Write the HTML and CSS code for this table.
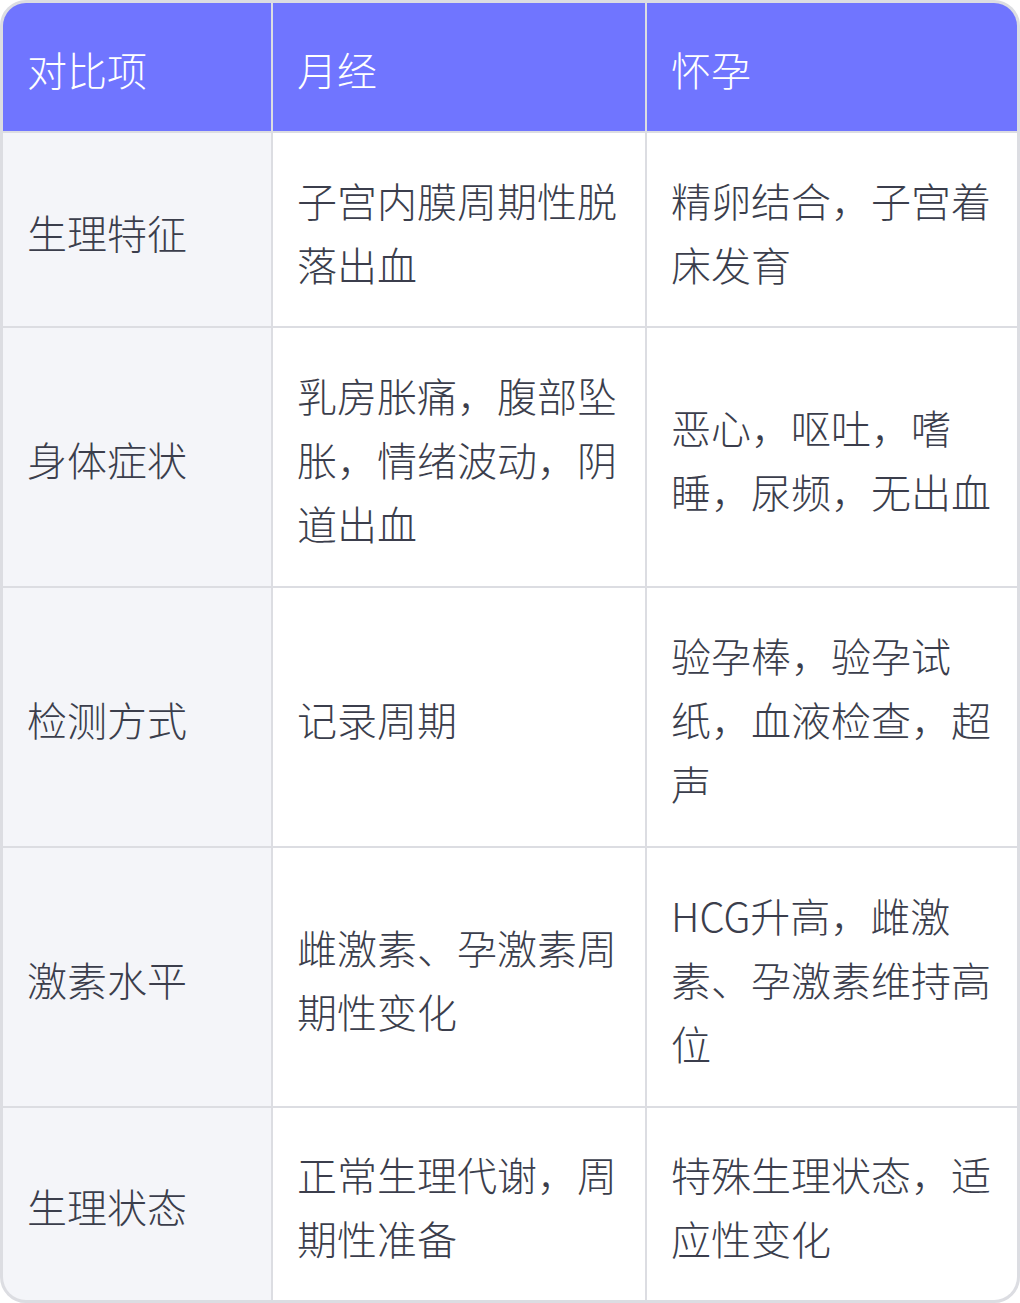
FILE: index.html
```html
<!DOCTYPE html>
<html lang="zh-CN">
<head>
<meta charset="utf-8">
<link rel="stylesheet" href="styles.css">
</head>
<body>
<div class="table">
  <div class="cell head">对比项</div>
  <div class="cell head">月经</div>
  <div class="cell head">怀孕</div>

  <div class="cell label">生理特征</div>
  <div class="cell">子宫内膜周期性脱落出血</div>
  <div class="cell">精卵结合，子宫着床发育</div>

  <div class="cell label">身体症状</div>
  <div class="cell">乳房胀痛，腹部坠胀，情绪波动，阴道出血</div>
  <div class="cell">恶心，呕吐，嗜睡，尿频，无出血</div>

  <div class="cell label">检测方式</div>
  <div class="cell">记录周期</div>
  <div class="cell">验孕棒，验孕试纸，血液检查，超声</div>

  <div class="cell label">激素水平</div>
  <div class="cell">雌激素、孕激素周期性变化</div>
  <div class="cell">HCG升高，雌激素、孕激素维持高位</div>

  <div class="cell label">生理状态</div>
  <div class="cell">正常生理代谢，周期性准备</div>
  <div class="cell">特殊生理状态，适应性变化</div>
</div>
</body>
</html>
```

FILE: styles.css
```css
html, body {
  margin: 0;
  padding: 0;
  background: #ffffff;
}
.table {
  width: 1020px;
  height: 1303px;
  box-sizing: border-box;
  border: 3px solid #dcdde2;
  border-radius: 26px;
  overflow: hidden;
  display: grid;
  grid-template-columns: 268px 372px 370px;
  grid-template-rows: 128px 193px 258px 258px 258px 192px;
  gap: 2px;
  background: #dcdde2;
  font-family: "Noto Sans CJK SC", "Noto Sans", sans-serif;
  font-weight: 300;
  font-size: 40px;
  line-height: 64px;
  color: #3b3e4c;
}
.cell {
  background: #ffffff;
  padding: 4px 24px 0 24px;
  display: flex;
  align-items: center;
  word-break: break-all;
}
.head {
  background: #7075ff;
  color: #ffffff;
}
.label {
  background: #f4f5f9;
}
```
